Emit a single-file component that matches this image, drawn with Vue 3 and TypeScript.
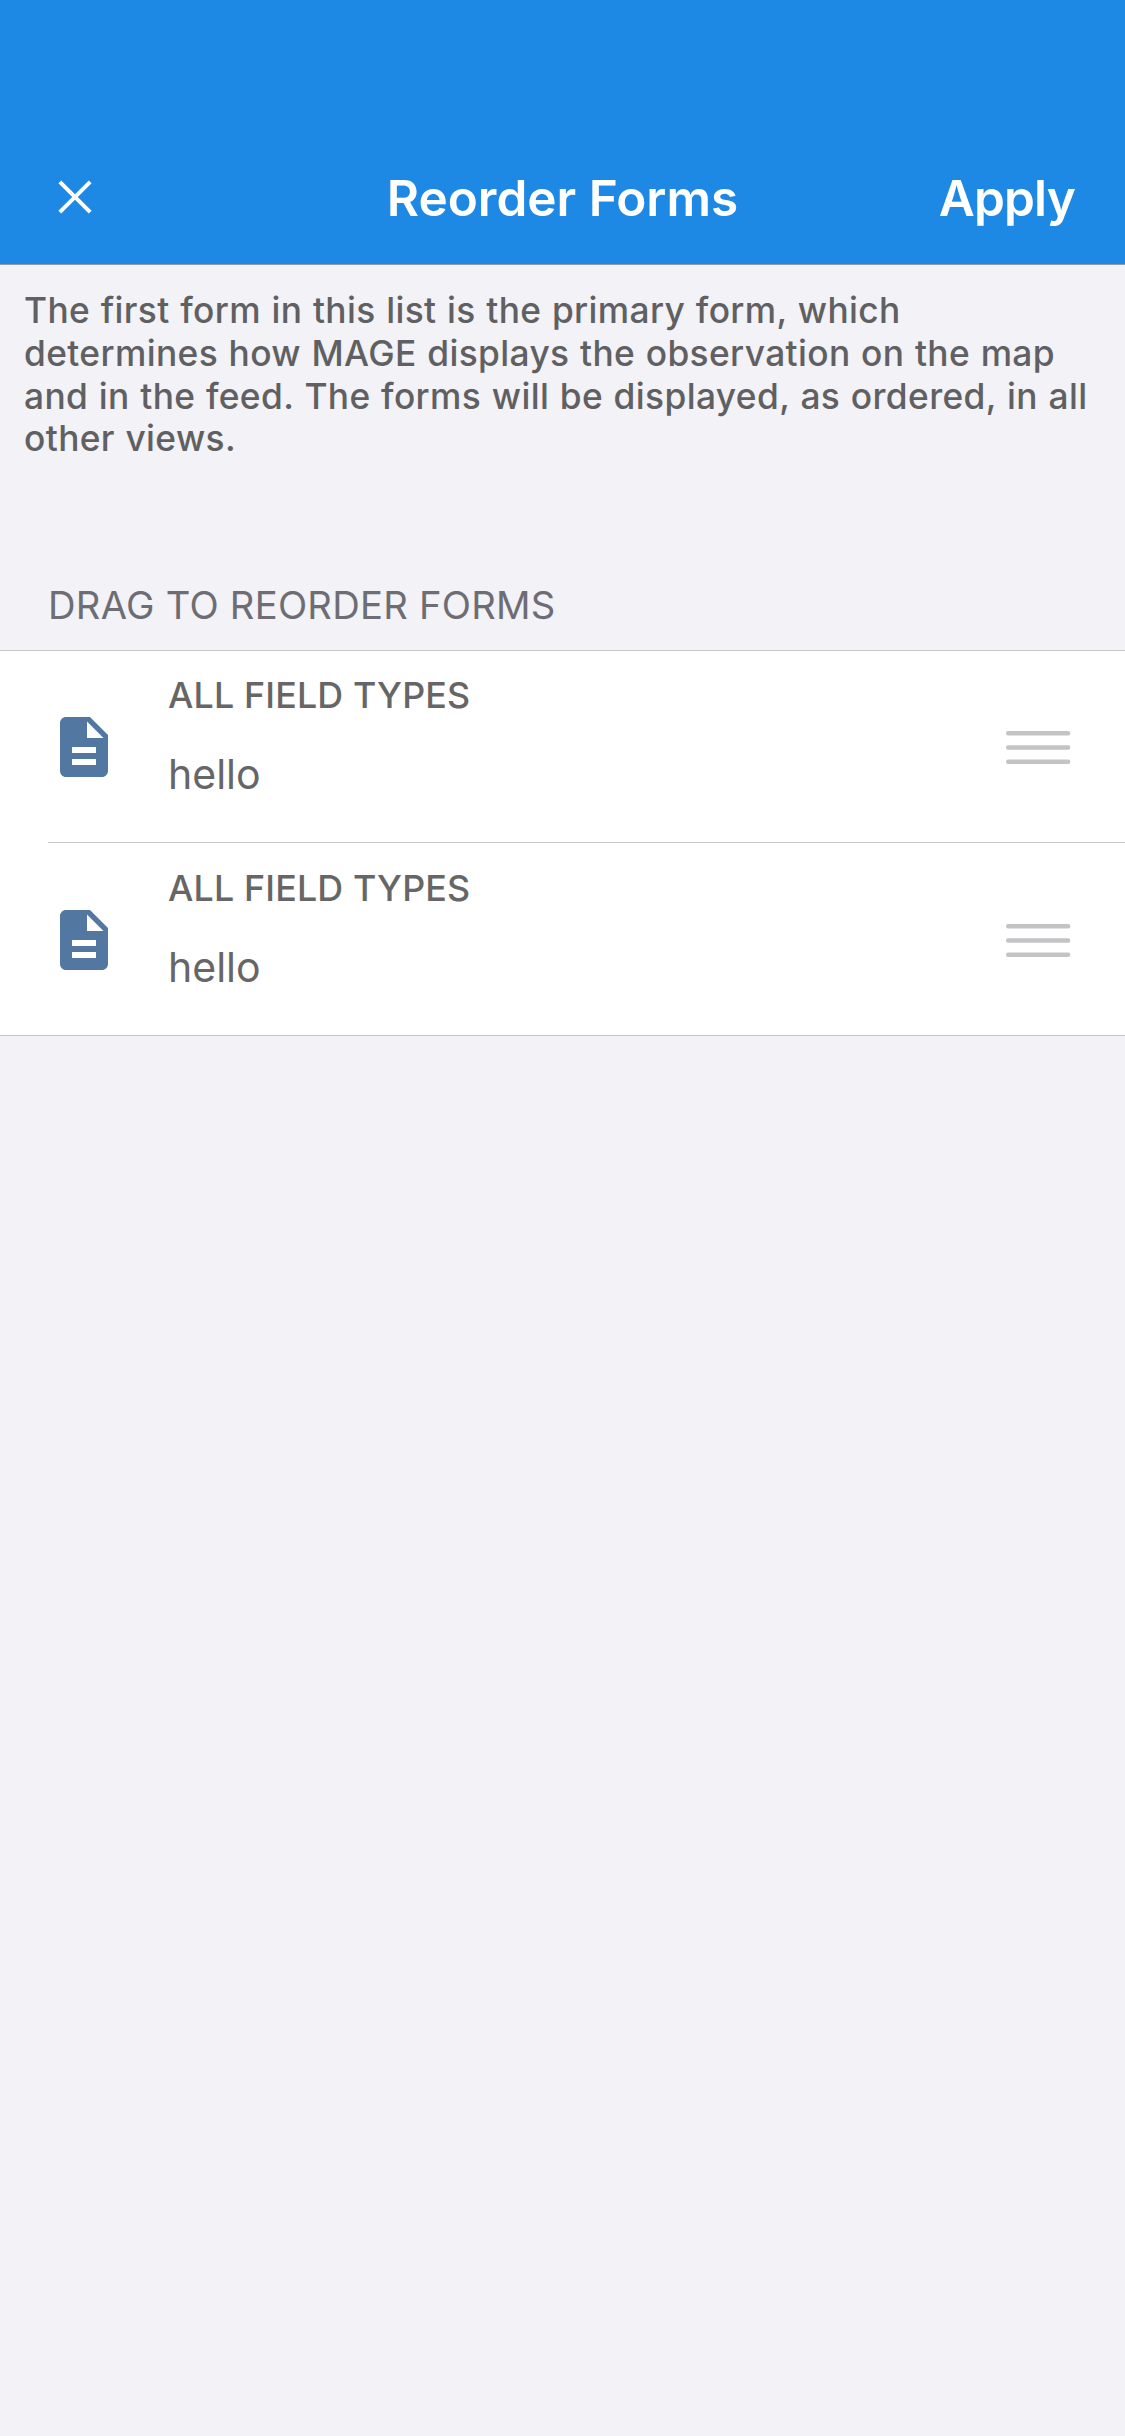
<script setup lang="ts">
interface FormEntry {
  id: number
  name: string
  summary: string
}

const intro: string[] = [
  'The first form in this list is the primary form, which',
  'determines how MAGE displays the observation on the map',
  'and in the feed. The forms will be displayed, as ordered, in all',
  'other views.',
]

const forms: FormEntry[] = [
  { id: 1, name: 'ALL FIELD TYPES', summary: 'hello' },
  { id: 2, name: 'ALL FIELD TYPES', summary: 'hello' },
]
</script>

<template>
  <div class="screen">
    <header class="bar">
      <button class="close" aria-label="Close">
        <svg width="34" height="34" viewBox="0 0 34 34">
          <path d="M1.8 1.8L32.2 32.2M32.2 1.8L1.8 32.2" stroke="#fff" stroke-width="4" fill="none" />
        </svg>
      </button>
      <h1 class="title">Reorder Forms</h1>
      <button class="apply">Apply</button>
    </header>

    <p class="intro">
      <span v-for="line in intro" :key="line" class="line">{{ line }}</span>
    </p>

    <h2 class="section">DRAG TO REORDER FORMS</h2>

    <ul class="list">
      <li v-for="form in forms" :key="form.id" class="row">
        <svg class="doc" width="72" height="72" viewBox="0 0 24 24">
          <path
            fill="#5278a2"
            d="M14 2H6c-1.1 0-2 .9-2 2v16c0 1.1.9 2 2 2h12c1.1 0 2-.9 2-2V8l-6-6zm2 16H8v-2h8v2zm0-4H8v-2h8v2zm-3-5V3.5L18.5 9H13z"
          />
        </svg>
        <div class="body">
          <div class="name">{{ form.name }}</div>
          <div class="summary">{{ form.summary }}</div>
        </div>
        <svg class="grip" width="65" height="34" viewBox="0 0 65 34">
          <g fill="#c4c4c6">
            <rect x="0" y="0" width="64.3" height="4.4" rx="2" />
            <rect x="0" y="14.3" width="64.3" height="4.4" rx="2" />
            <rect x="0" y="28.6" width="64.3" height="4.4" rx="2" />
          </g>
        </svg>
      </li>
    </ul>
  </div>
</template>

<style>
body {
  margin: 0;
  background: #f2f2f7;
}
</style>

<style scoped>
.screen {
  box-sizing: border-box;
  width: 1125px;
  min-height: 2436px;
  background: #f2f2f7;
  font-family: Inter, "Liberation Sans", sans-serif;
}
.bar {
  box-sizing: border-box;
  display: grid;
  grid-template-columns: 1fr auto 1fr;
  align-items: center;
  height: 265px;
  padding: 132px 49px 0;
  border-bottom: 1px solid #8f9bab;
  background: #1e88e5;
  color: #fff;
}
button {
  padding: 0;
  border: 0;
  background: none;
  color: inherit;
  font: inherit;
}
.close {
  justify-self: start;
  display: flex;
  margin: -2px 0 0 9px;
}
.title,
.apply {
  margin: 0;
  font-size: 49.5px;
  font-weight: 600;
  line-height: 60px;
  white-space: nowrap;
}
.apply {
  justify-self: end;
  margin-right: 1px;
  letter-spacing: -0.8px;
}
.intro {
  margin: 0;
  padding: 24.3px 0 0 24px;
  color: #606062;
  font-size: 35.3px;
  font-weight: 500;
  line-height: 43px;
  letter-spacing: 0.38px;
  word-spacing: 0.75px;
}
.line {
  display: block;
  height: 42.7px;
  white-space: nowrap;
}
.section {
  margin: 0;
  padding: 120.9px 0 21px 48px;
  color: #6e6d73;
  font-size: 38.2px;
  font-weight: 400;
  line-height: 48px;
  letter-spacing: 0.25px;
}
.list {
  margin: 0;
  padding: 0;
  list-style: none;
  background: #fff;
  border-top: 1px solid #c6c6c8;
  border-bottom: 1px solid #c6c6c8;
}
.row {
  display: flex;
  align-items: flex-start;
  height: 191px;
  margin-left: 48px;
  padding-right: 54px;
}
.row + .row {
  padding-top: 1px;
  border-top: 1px solid #c6c6c8;
}
.doc {
  margin-top: 60px;
}
.body {
  flex: 1;
  margin-left: 48px;
  padding-top: 22px;
  color: #666;
}
.name {
  font-size: 35.8px;
  font-weight: 500;
  line-height: 44px;
  letter-spacing: 0.15px;
}
.summary {
  margin-top: 32px;
  font-size: 41px;
  line-height: 50px;
}
.grip {
  margin-top: 80px;
}
</style>
